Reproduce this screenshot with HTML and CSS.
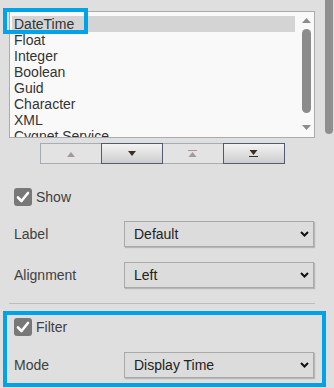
FILE: index.html
```html
<!DOCTYPE html>
<html lang="en">
<head>
  <meta charset="UTF-8" />
  <title>Column Properties</title>
  <link rel="stylesheet" href="styles.css">
</head>
<body>
  <div class="page">
    <div class="panel">

      <div class="list-wrap">
        <div class="list">
          <div class="items">
            <div class="item sel">DateTime</div>
            <div class="item">Float</div>
            <div class="item">Integer</div>
            <div class="item">Boolean</div>
            <div class="item">Guid</div>
            <div class="item">Character</div>
            <div class="item">XML</div>
            <div class="item">Cygnet Service</div>
          </div>
          <div class="vscroll">
            <svg class="arr" width="9" height="5" viewBox="0 0 9 5"><polygon points="0,5 4.5,0 9,5" /></svg>
            <div class="thumb"></div>
            <svg class="arr" width="9" height="5" viewBox="0 0 9 5"><polygon points="0,0 9,0 4.5,5" /></svg>
          </div>
        </div>
        <div class="mark mark-item"></div>
      </div>

      <div class="order-btns">
        <div class="obtn off">
          <svg width="8" height="6" viewBox="0 0 8 6"><polygon points="0,6 4,1 8,6" /></svg>
        </div>
        <div class="obtn">
          <svg width="8" height="6" viewBox="0 0 8 6"><polygon points="0,0 8,0 4,5" /></svg>
        </div>
        <div class="obtn off">
          <svg width="9" height="7" viewBox="0 0 9 7"><rect x="0" y="0" width="9" height="1" /><polygon points="0.5,7 4.5,2 8.5,7" /></svg>
        </div>
        <div class="obtn">
          <svg width="9" height="7" viewBox="0 0 9 7"><polygon points="0.5,0 8.5,0 4.5,5" /><rect x="0" y="6" width="9" height="1" /></svg>
        </div>
      </div>

      <div class="check-row show-row">
        <span class="check"><svg width="14" height="12" viewBox="0 0 14 12"><polyline points="2,6.5 5.5,10 12,2" /></svg></span>
        <span>Show</span>
      </div>

      <div class="field">
        <span class="lbl">Label</span>
        <div class="select"><span>Default</span><svg width="9" height="6" viewBox="0 0 9 6"><polyline points="1,1 4.5,4.5 8,1" /></svg></div>
      </div>

      <div class="field">
        <span class="lbl">Alignment</span>
        <div class="select"><span>Left</span><svg width="9" height="6" viewBox="0 0 9 6"><polyline points="1,1 4.5,4.5 8,1" /></svg></div>
      </div>

      <div class="sep"></div>

      <div class="filter">
        <div class="check-row">
          <span class="check"><svg width="14" height="12" viewBox="0 0 14 12"><polyline points="2,6.5 5.5,10 12,2" /></svg></span>
          <span>Filter</span>
        </div>
        <div class="field mode">
          <span class="lbl">Mode</span>
          <div class="select"><span>Display Time</span><svg width="9" height="6" viewBox="0 0 9 6"><polyline points="1,1 4.5,4.5 8,1" /></svg></div>
        </div>
        <div class="mark mark-filter"></div>
      </div>

    </div>
    <div class="page-scroll"><div class="page-thumb"></div></div>
  </div>
</body>
</html>
```

FILE: styles.css
```css
* { box-sizing: border-box; }
body {
  margin: 0;
  background: #dfdfdf;
  font-family: "Liberation Sans", Arial, sans-serif;
  font-size: 14px;
  color: #3c3c3c;
  overflow: hidden;
}
.page {
  display: flex;
  height: 388px;
}
.panel {
  width: 325px;
  padding: 11px 10px 0 9px;
}
.page-scroll {
  width: 9px;
}
.page-thumb {
  width: 8px;
  height: 134px;
  background: #8f8f8f;
  border-radius: 0 0 4px 4px;
}

/* list box */
.list-wrap { position: relative; }
.list {
  display: flex;
  width: 306px;
  height: 127px;
  border: 1px solid #ababab;
  background: #f9f9f9;
}
.items {
  flex: 1;
  padding: 4px 5px 0 2px;
  overflow: hidden;
}
.item {
  height: 16px;
  line-height: 16px;
  padding-left: 2px;
  color: #333;
  white-space: nowrap;
}
.item.sel { background: #d4d4d4; }
.vscroll {
  width: 14px;
  display: flex;
  flex-direction: column;
  align-items: flex-start;
  padding: 6px 0 0 2px;
}
.vscroll .arr { fill: #8c8c8c; display: block; }
.thumb {
  width: 9px;
  height: 84px;
  margin: 6px 0 12px;
  background: #8c8c8c;
  border-radius: 5px;
}

/* annotation frames */
.mark {
  position: absolute;
  border: 4px solid #00a2e8;
  pointer-events: none;
}
.mark-item {
  left: -6px;
  top: -3px;
  width: 85px;
  height: 26px;
}
.mark-filter {
  left: -6px;
  top: -7px;
  width: 323px;
  height: 76px;
}

/* order buttons */
.order-btns {
  display: flex;
  justify-content: center;
  margin-top: 5px;
}
.obtn {
  width: 62px;
  height: 21px;
  border: 1px solid #4f5d6c;
  background: linear-gradient(#f3f3f3, #cdcdcd);
  display: flex;
  align-items: center;
  justify-content: center;
  fill: #3b2d28;
  position: relative;
}
.obtn + .obtn { margin-left: -1px; }
.obtn.off {
  border-color: #a4acb4;
  background: #e3e3e3;
  fill: #a39a95;
  z-index: 0;
}
.obtn:not(.off) { z-index: 1; }

/* form rows */
.check-row {
  display: flex;
  align-items: center;
  gap: 4px;
  height: 18px;
  padding-left: 5px;
  color: #404040;
}
.show-row { margin-top: 24px; }
.check {
  width: 18px;
  height: 18px;
  border-radius: 3px;
  background: #787878;
  display: flex;
  align-items: center;
  justify-content: center;
}
.check svg {
  fill: none;
  stroke: #fff;
  stroke-width: 2.6;
  stroke-linecap: round;
  stroke-linejoin: round;
}
.field {
  display: flex;
  align-items: center;
  margin-top: 15px;
  padding-left: 5px;
}
.lbl {
  width: 110px;
  color: #404040;
}
.select {
  width: 190px;
  height: 26px;
  border: 1px solid #a9a9a9;
  background: #dcdcdc;
  box-shadow: 1px 1px 1px rgba(0, 0, 0, 0.18);
  display: flex;
  align-items: center;
  justify-content: space-between;
  padding: 0 4px 0 9px;
  color: #222;
}
.select svg {
  fill: none;
  stroke: #111;
  stroke-width: 2;
}
.sep {
  margin-top: 15px;
  border-top: 1px solid #bcbcbc;
  width: 306px;
}
.filter {
  position: relative;
  margin-top: 14px;
}
.field.mode { margin-top: 16px; }
```
